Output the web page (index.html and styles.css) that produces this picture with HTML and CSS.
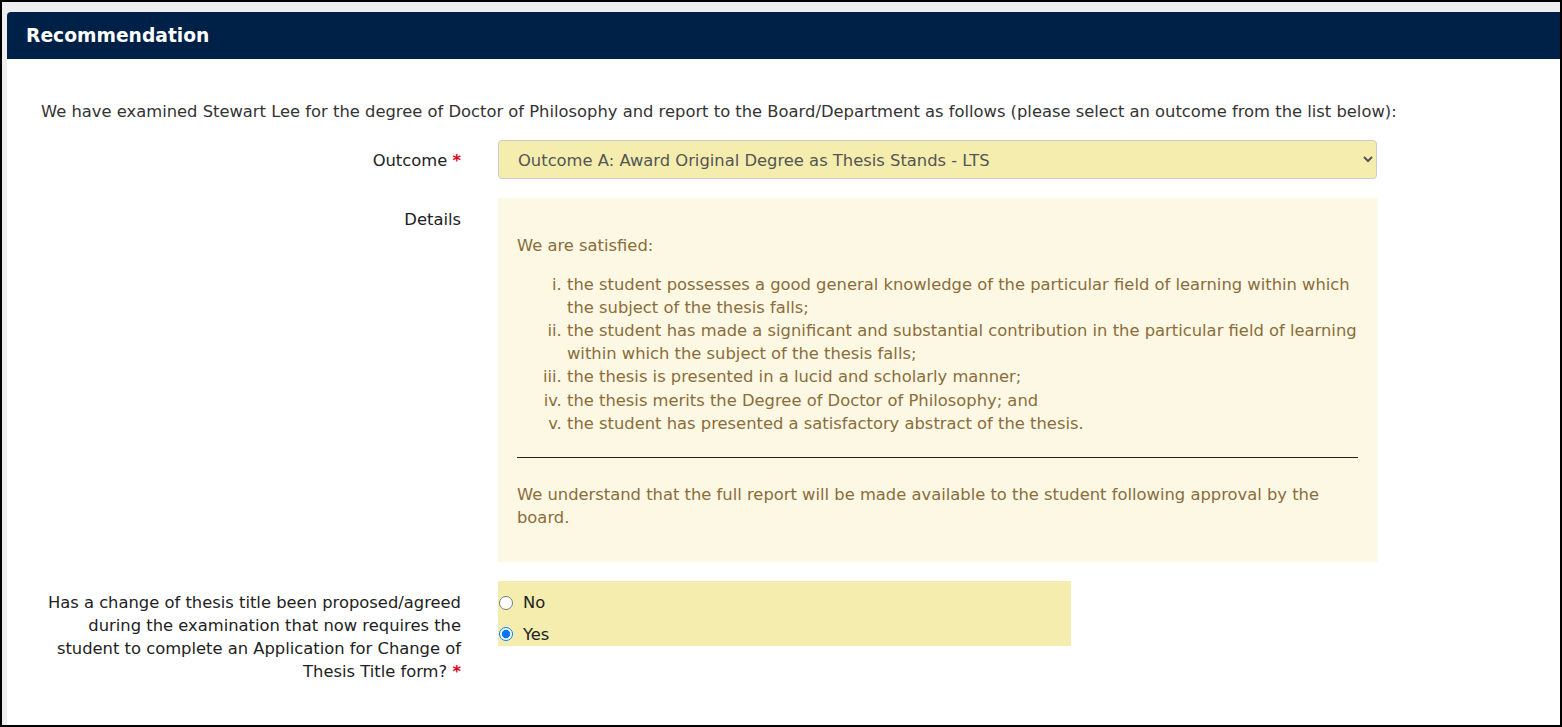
FILE: index.html
```html
<!DOCTYPE html>
<html lang="en">
<head>
<meta charset="utf-8">
<title>Recommendation</title>
<link rel="stylesheet" href="styles.css">
</head>
<body>
<div class="frame">
  <section class="panel">
    <header class="panel-heading">
      <h2 class="panel-title">Recommendation</h2>
    </header>
    <div class="panel-body">
      <p class="intro">We have examined Stewart Lee for the degree of Doctor of Philosophy and report to the Board/Department as follows (please select an outcome from the list below):</p>

      <div class="form-row">
        <label class="control-label control-label-select" for="outcome">Outcome<span class="req">*</span></label>
        <div class="control">
          <select id="outcome" class="select">
            <option>Outcome A: Award Original Degree as Thesis Stands - LTS</option>
          </select>
        </div>
      </div>

      <div class="form-row">
        <div class="control-label">Details</div>
        <div class="control">
          <div class="details">
            <p class="details-lead">We are satisfied:</p>
            <ol class="details-list">
              <li>the student possesses a good general knowledge of the particular field of learning within which the subject of the thesis falls;</li>
              <li>the student has made a significant and substantial contribution in the particular field of learning within which the subject of the thesis falls;</li>
              <li>the thesis is presented in a lucid and scholarly manner;</li>
              <li>the thesis merits the Degree of Doctor of Philosophy; and</li>
              <li>the student has presented a satisfactory abstract of the thesis.</li>
            </ol>
            <hr class="details-rule">
            <p class="details-note">We understand that the full report will be made available to the student following approval by the board.</p>
          </div>
        </div>
      </div>

      <div class="form-row">
        <div class="control-label">Has a change of thesis title been proposed/agreed during the examination that now requires the student to complete an Application for Change of Thesis Title form?<span class="req">*</span></div>
        <div class="control">
          <div class="radios">
            <label class="radio"><input type="radio" name="title-change" value="no"><span>No</span></label>
            <label class="radio"><input type="radio" name="title-change" value="yes" checked><span>Yes</span></label>
          </div>
        </div>
      </div>
    </div>
  </section>
</div>
</body>
</html>
```

FILE: styles.css
```css
* {
  box-sizing: border-box;
}

html, body {
  margin: 0;
  padding: 0;
}

body {
  font-family: "DejaVu Sans", Verdana, sans-serif;
  font-size: 16.35px;
  line-height: 23.2px;
  color: #333;
}

.frame {
  width: 1562px;
  height: 727px;
  border: 2px solid #000;
  background: #eeeeee;
  padding: 10px 0 0 5px;
  display: flex;
  flex-direction: column;
  overflow: hidden;
}

.panel {
  flex: 1;
  display: flex;
  flex-direction: column;
  background: #fff;
  border-top-left-radius: 4px;
}

.panel-heading {
  background: #002147;
  height: 47px;
  padding: 2px 19px 0;
  display: flex;
  align-items: center;
  border-top-left-radius: 4px;
}

.panel-title {
  margin: 0;
  color: #fff;
  font-size: 18.7px;
  font-weight: bold;
  line-height: 1;
}

.panel-body {
  flex: 1;
  padding: 41px 0 0 34px;
}

.intro {
  margin: 0 0 17px;
}

.form-row {
  display: grid;
  grid-template-columns: 420px 879px;
  column-gap: 37px;
  margin-bottom: 19px;
}

.control-label {
  text-align: right;
  padding-top: 10px;
  color: #222;
}

.control-label-select {
  padding-top: 9px;
}

.req {
  color: #e0001b;
  font-weight: bold;
  margin-left: 0.32em;
}

.select {
  width: 100%;
  height: 39px;
  border: 1px solid #cccccc;
  border-radius: 4px;
  background-color: #f4edae;
  color: #555;
  font-family: inherit;
  font-size: 16.35px;
  padding: 2px 12px 0 15px;
}

.details {
  background: #fcf8e3;
  color: #8a6d3b;
  padding: 35.4px 19px 32.4px;
}

.details-lead {
  margin: 0 0 15.8px;
}

.details-list {
  list-style: lower-roman;
  margin: 0;
  padding-left: 50px;
}

.details-rule {
  border: 0;
  border-top: 1px solid #222;
  margin: 22.4px 0 24.4px;
  height: 0;
}

.details-note {
  margin: 0;
}

.radios {
  width: 573px;
  background: #f4edae;
  padding: 10.4px 0 0;
  display: flex;
  flex-direction: column;
  gap: 8.6px;
}

.radio {
  display: flex;
  align-items: center;
  color: #222;
}

.radio input {
  width: 14px;
  height: 14px;
  margin: 0 10px 0 1px;
}
```
